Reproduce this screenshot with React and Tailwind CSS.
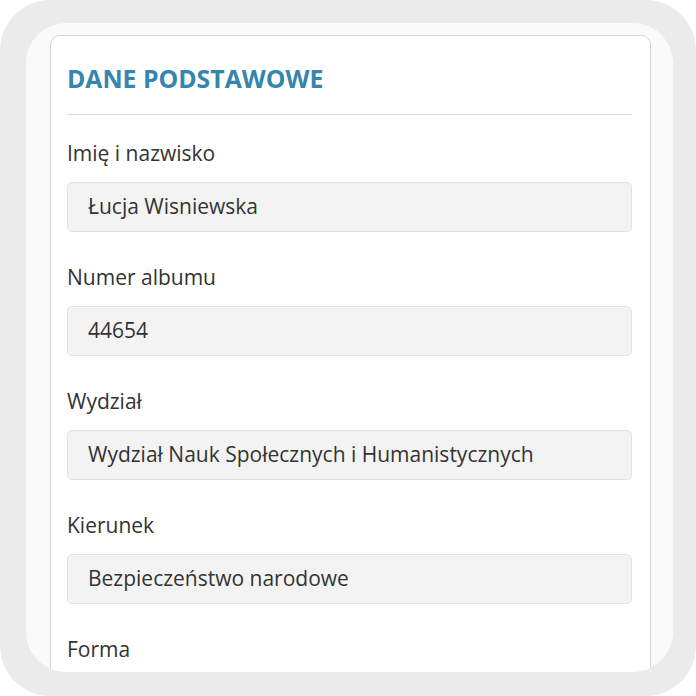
import React from "react";

const fields = [
  { label: "Imię i nazwisko", value: "Łucja Wisniewska" },
  { label: "Numer albumu", value: "44654" },
  { label: "Wydział", value: "Wydział Nauk Społecznych i Humanistycznych" },
  { label: "Kierunek", value: "Bezpieczeństwo narodowe" },
  { label: "Forma", value: "" },
];

const Field = ({ label, value }) => (
  <div className="flex flex-col">
    <label className="text-[21px] leading-[28px] text-[#333]">{label}</label>
    <div className="mt-[15px] mb-[31px] h-[50px] flex items-center px-[20px] bg-[#f3f3f3] border border-[#e2e2e2] rounded-[5px] text-[21px] text-[#333]">
      {value}
    </div>
  </div>
);

export default function App() {
  return (
    <div className="w-[696px] h-[696px] bg-white" style={{ fontFamily: "'Open Sans', 'Noto Sans', sans-serif" }}>
      <div className="w-full h-full rounded-[50px] bg-[#ebebeb] pt-[23px] pl-[26px] pr-[23px] pb-[24px]">
        <div className="w-full h-full rounded-[40px] bg-[#fafafa] overflow-hidden pl-[24px] pr-[22px] pt-[12px]">
          <div className="bg-white border border-[#d6d6d6] rounded-[10px] pl-[16px] pr-[18px] pt-[27px] min-h-[700px]">
            <h2 className="text-[24.8px] leading-[30px] font-bold text-[#3585ae]">
              DANE PODSTAWOWE
            </h2>
            <div className="mt-[21px] mb-[24px] border-t border-[#dcdcdc]" />
            {fields.map((f) => (
              <Field key={f.label} {...f} />
            ))}
          </div>
        </div>
      </div>
    </div>
  );
}
